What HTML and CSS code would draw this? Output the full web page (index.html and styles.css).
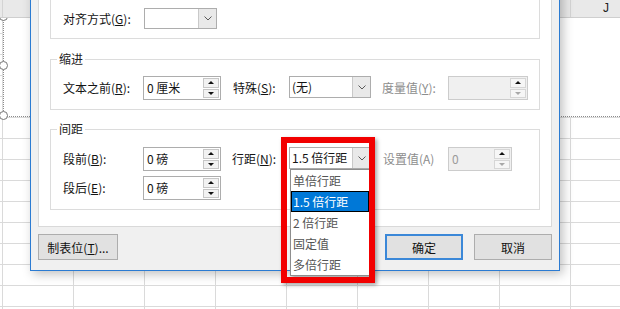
FILE: index.html
```html
<!DOCTYPE html>
<html lang="zh-CN">
<head>
    <meta charset="UTF-8">
    <title>段落</title>
    <link rel="stylesheet" href="styles.css">
</head>
<body>
    <div class="sheet">
        <div class="col-heads">
            <div class="col-head first"></div>
            <div class="col-head"></div>
            <div class="col-head"></div>
            <div class="col-head"></div>
            <div class="col-head"></div>
            <div class="col-head"></div>
            <div class="col-head"></div>
            <div class="col-head"></div>
            <div class="col-head"></div>
            <div class="col-head">J</div>
        </div>
        <div class="cells"></div>
        <div class="shape">
            <span class="handle h-top"></span>
            <span class="handle h-mid"></span>
            <span class="handle h-bot"></span>
        </div>
    </div>

    <div class="dialog">
        <div class="page">
            <fieldset class="group group-general">
                <div class="row row-short">
                    <label class="lbl lbl-align">对齐方式(<u>G</u>):</label>
                    <div class="select select-align">
                        <span class="text"></span>
                        <span class="drop"><svg width="8" height="5" viewBox="0 0 8 5"><polyline points="0.5,0.5 4,4 7.5,0.5" fill="none" stroke="#5a5a5a" stroke-width="1"/></svg></span>
                    </div>
                </div>
            </fieldset>

            <fieldset class="group group-indent">
                <legend>缩进</legend>
                <div class="row">
                    <label class="lbl lbl-first">文本之前(<u>R</u>):</label>
                    <div class="spin spin-main">
                        <span class="text">0 厘米</span>
                        <span class="arrows"><span class="up"></span><span class="dn"></span></span>
                    </div>
                    <label class="lbl lbl-special">特殊(<u>S</u>):</label>
                    <div class="select select-mid">
                        <span class="text">(无)</span>
                        <span class="drop"><svg width="8" height="5" viewBox="0 0 8 5"><polyline points="0.5,0.5 4,4 7.5,0.5" fill="none" stroke="#5a5a5a" stroke-width="1"/></svg></span>
                    </div>
                    <label class="lbl lbl-by off">度量值(<u>Y</u>):</label>
                    <div class="spin spin-by off">
                        <span class="text"></span>
                        <span class="arrows"><span class="up"></span><span class="dn"></span></span>
                    </div>
                </div>
            </fieldset>

            <fieldset class="group group-spacing">
                <legend>间距</legend>
                <div class="row">
                    <label class="lbl lbl-first">段前(<u>B</u>):</label>
                    <div class="spin spin-main">
                        <span class="text">0 磅</span>
                        <span class="arrows"><span class="up"></span><span class="dn"></span></span>
                    </div>
                    <label class="lbl lbl-line">行距(<u>N</u>):</label>
                    <div class="combo">
                        <div class="select select-mid">
                            <span class="text">1.5 倍行距</span>
                            <span class="drop"><svg width="8" height="5" viewBox="0 0 8 5"><polyline points="0.5,0.5 4,4 7.5,0.5" fill="none" stroke="#5a5a5a" stroke-width="1"/></svg></span>
                        </div>
                        <ul class="list">
                            <li>单倍行距</li>
                            <li class="on">1.5 倍行距</li>
                            <li>2 倍行距</li>
                            <li>固定值</li>
                            <li>多倍行距</li>
                        </ul>
                    </div>
                    <label class="lbl lbl-at off">设置值(A)</label>
                    <div class="spin spin-at off">
                        <span class="text">0</span>
                        <span class="arrows"><span class="up"></span><span class="dn"></span></span>
                    </div>
                </div>
                <div class="row">
                    <label class="lbl lbl-first">段后(<u>E</u>):</label>
                    <div class="spin spin-main">
                        <span class="text">0 磅</span>
                        <span class="arrows"><span class="up"></span><span class="dn"></span></span>
                    </div>
                </div>
            </fieldset>
        </div>

        <div class="actions">
            <button class="btn btn-tabs">制表位(<u>T</u>)...</button>
            <button class="btn btn-ok">确定</button>
            <button class="btn btn-cancel">取消</button>
        </div>
    </div>

    <div class="callout"></div>
</body>
</html>
```

FILE: styles.css
```css
* {
    box-sizing: border-box;
}
body {
    margin: 0;
    width: 620px;
    height: 309px;
    overflow: hidden;
    position: relative;
    background: #fff;
    color: #141414;
    font-family: "Noto Sans CJK SC", sans-serif;
    font-size: 12px;
}

/* spreadsheet behind the dialog */
.sheet {
    position: relative;
    height: 309px;
}
.col-heads {
    display: flex;
    height: 18px;
    background: #e9e9e9;
    border-bottom: 1px solid #cfcfcf;
    position: relative;
    z-index: 2;
}
.col-head {
    flex: none;
    width: 71px;
    border-right: 1px solid #d4d4d4;
    text-align: center;
    font-family: "Liberation Sans", sans-serif;
    font-size: 12px;
    line-height: 17px;
    color: #222;
}
.col-head.first {
    width: 3px;
}
.cells {
    height: 291px;
    background-color: #fff;
    background-image: linear-gradient(to right, #dadada 1px, transparent 1px),
                      linear-gradient(to bottom, #dadada 1px, transparent 1px);
    background-size: 71px 100%, 100% 21px;
    background-position: 2px 0, 0 15px;
}
.shape {
    position: absolute;
    left: 3px;
    top: 17px;
    right: -20px;
    height: 100px;
    background: #fff;
    border-left: 1px dotted #8c8c8c;
    border-bottom: 1px dotted #8c8c8c;
    z-index: 1;
}
.handle {
    position: absolute;
    left: -5px;
    width: 9px;
    height: 9px;
    border: 1px solid #777;
    border-radius: 50%;
    background: #fff;
}
.h-top { top: -5px; }
.h-mid { top: 44px; }
.h-bot { top: 94px; }

/* dialog */
.dialog {
    position: absolute;
    left: 30px;
    top: -30px;
    width: 530px;
    height: 301px;
    padding: 0 7px;
    background: #f0f0f0;
    border: 1px solid #2b7bd2;
    box-shadow: 3px 3px 10px rgba(0, 0, 0, 0.25);
    display: flex;
    flex-direction: column;
    z-index: 3;
}
.page {
    height: 256px;
    padding: 0 11px;
    background: #fff;
    border: 1px solid #d9d9d9;
}
.group {
    margin: 0;
    min-width: 0;
    padding: 9px 11px 9px 12px;
    border: 1px solid #dcdcdc;
}
.group legend {
    padding: 0 2px;
    margin-left: -6px;
    font-size: 12px;
    line-height: 16px;
    color: #222;
}
.group-general {
    margin-top: 8px;
    padding-top: 27px;
}
.group-indent {
    margin-top: 12px;
}
.group-spacing {
    margin-top: 11px;
    padding-top: 10px;
}

.row {
    display: flex;
    align-items: flex-start;
    height: 24px;
}
.row + .row {
    margin-top: 5px;
}
.row-short {
    height: 21px;
}
.lbl {
    flex: none;
    line-height: 24px;
    white-space: nowrap;
}
.row-short .lbl {
    line-height: 21px;
}
.lbl.off {
    color: #8d8d8d;
}
.lbl-align { width: 81px; }
.lbl-first { width: 80px; }
.lbl-special { width: 56px; margin-left: 12px; }
.lbl-by { width: 66px; margin-left: 11px; }
.lbl-line { width: 57px; margin-left: 11px; }
.lbl-at { width: 65px; margin-left: 12px; }

/* combo boxes */
.select {
    flex: none;
    display: flex;
    height: 22px;
    background: #fff;
    border: 1px solid #adadad;
}
.select .text {
    flex: 1;
    padding-left: 2px;
    line-height: 20px;
    white-space: nowrap;
    overflow: hidden;
}
.select .drop {
    width: 18px;
    background: #e9e9e9;
    border-left: 1px solid #c9c9c9;
    display: flex;
    align-items: center;
    justify-content: center;
}
.select-align {
    width: 73px;
    height: 21px;
}
.select-mid {
    width: 82px;
}
.combo {
    position: relative;
    flex: none;
}

/* open drop-down list */
.list {
    position: absolute;
    top: 22px;
    left: 1px;
    right: 1px;
    margin: 0;
    padding: 0;
    list-style: none;
    background: #fff;
    border: 1px solid #8e8e8e;
    box-shadow: 2px 2px 3px rgba(0, 0, 0, 0.3);
    z-index: 4;
}
.list li {
    height: 21px;
    padding-left: 2px;
    line-height: 21px;
    color: #555;
    white-space: nowrap;
}
.list li.on {
    padding-left: 1px;
    line-height: 19px;
    background: #0078d7;
    border: 1px solid #000;
    color: #fff;
}

/* spin boxes */
.spin {
    flex: none;
    display: flex;
    height: 24px;
    background: #fff;
    border: 1px solid #adadad;
}
.spin .text {
    flex: 1;
    padding-left: 3px;
    line-height: 22px;
    white-space: nowrap;
}
.spin .arrows {
    width: 16px;
    margin: 1px 1px 1px 0;
    display: flex;
    flex-direction: column;
    gap: 1px;
}
.arrows span {
    flex: 1;
    background: #f2f2f2;
    border: 1px solid #c6c6c6;
    display: flex;
    align-items: center;
    justify-content: center;
}
.arrows .up::after {
    content: "";
    border-left: 3px solid transparent;
    border-right: 3px solid transparent;
    border-bottom: 3px solid #111;
}
.arrows .dn::after {
    content: "";
    border-left: 3px solid transparent;
    border-right: 3px solid transparent;
    border-top: 3px solid #111;
}
.spin-main { width: 78px; }
.spin-by { width: 80px; }
.spin-at { width: 64px; }
.spin.off {
    background: #f0f0f0;
    border-color: #cccccc;
    color: #9a9a9a;
}
.spin.off .arrows span {
    background: #f6f6f6;
    border-color: #d6d6d6;
}
.spin.off .arrows .dn::after {
    border-top-color: #a8a8a8;
}

/* bottom buttons */
.actions {
    display: flex;
    gap: 11px;
    margin-top: 7px;
}
.btn {
    height: 26px;
    padding: 0;
    background: #e1e1e1;
    border: 1px solid #adadad;
    color: #111;
    font-family: inherit;
    font-size: 12px;
}
.btn-tabs { width: 80px; }
.btn-ok {
    width: 78px;
    margin-left: auto;
    border: 2px solid #3b88d8;
}
.btn-cancel { width: 78px; }

/* red highlight box drawn over the screenshot */
.callout {
    position: absolute;
    left: 281px;
    top: 137px;
    width: 94px;
    height: 146px;
    border: 6px solid #f20000;
    box-shadow: 2px 2px 4px rgba(0, 0, 0, 0.35);
    z-index: 5;
}
```
